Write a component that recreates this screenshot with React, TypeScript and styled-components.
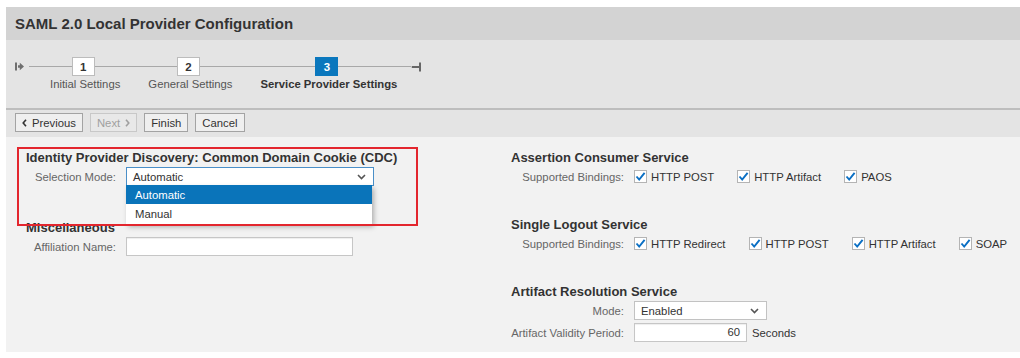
import React from "react";
import styled, { createGlobalStyle } from "styled-components";

const GlobalStyle = createGlobalStyle`
  html, body {
    margin: 0;
    padding: 0;
    background: #ffffff;
  }
  body {
    font-family: "Liberation Sans", Arial, sans-serif;
    font-size: 11.3px;
    color: #333333;
  }
  * {
    box-sizing: border-box;
  }
`;

const Page = styled.div`
  height: 358px;
  padding: 7px 0 6px 6px;
  display: flex;
  flex-direction: column;
`;

const TitleBar = styled.header`
  height: 33px;
  flex: none;
  background: #d3d3d3;
  display: flex;
  align-items: center;
  padding-left: 9px;
  h1 {
    margin: 0;
    font-size: 15px;
    font-weight: 700;
    color: #333333;
  }
`;

const Stepper = styled.div`
  height: 70px;
  flex: none;
  background: #e4e4e4;
  border-bottom: 2px solid #bdbdbd;
  padding: 17px 0 0 9px;
  display: flex;
  align-items: flex-start;
`;

const Cap = styled.div<{ $width: number }>`
  width: ${(p) => p.$width}px;
  height: 19px;
  flex: none;
  display: flex;
  align-items: center;
  svg {
    flex: none;
  }
`;

const Connector = styled.span`
  flex: 1;
  height: 1px;
  background: #a8a8a8;
  margin-left: 5px;
`;

const Step = styled.div`
  position: relative;
  padding: 0 14px;
  display: flex;
  flex-direction: column;
  align-items: center;
  &::before {
    content: "";
    position: absolute;
    left: 0;
    right: 0;
    top: 9px;
    height: 1px;
    background: #a8a8a8;
  }
`;

const StepBox = styled.span<{ $active?: boolean }>`
  position: relative;
  z-index: 1;
  width: 23px;
  height: 19px;
  margin-right: 4px;
  display: flex;
  align-items: center;
  justify-content: center;
  font-weight: 700;
  font-size: 11.5px;
  background: ${(p) => (p.$active ? "#0a77bd" : "#ffffff")};
  color: ${(p) => (p.$active ? "#ffffff" : "#333333")};
  border: 1px solid ${(p) => (p.$active ? "#0a77bd" : "#bcbcbc")};
`;

const StepLabel = styled.span<{ $active?: boolean }>`
  margin-top: 1px;
  line-height: 14px;
  white-space: nowrap;
  font-weight: ${(p) => (p.$active ? 700 : 400)};
  color: ${(p) => (p.$active ? "#333333" : "#555555")};
`;

const Toolbar = styled.div`
  height: 27px;
  flex: none;
  background: #e4e4e4;
  padding: 3px 0 0 9px;
  display: flex;
  align-items: flex-start;
  gap: 7px;
`;

const Button = styled.button`
  height: 19px;
  padding: 0 6px;
  display: inline-flex;
  align-items: center;
  gap: 5px;
  font-family: inherit;
  font-size: 11.3px;
  color: #333333;
  background: #efefef;
  border: 1px solid #a3a3a3;
  border-radius: 0;
  &:disabled {
    color: #a0a0a0;
    background: #e8e8e8;
    border-color: #c8c8c8;
  }
`;

const Content = styled.main`
  flex: 1;
  background: #f2f2f2;
  padding: 14px 0 0 20px;
  display: grid;
  grid-template-columns: 485px 1fr;
  align-items: start;
`;

const Column = styled.div<{ $gap: number }>`
  display: flex;
  flex-direction: column;
  gap: ${(p) => p.$gap}px;
`;

const Section = styled.section`
  position: relative;
  display: flex;
  flex-direction: column;
`;

const Highlight = styled.span`
  position: absolute;
  left: -9px;
  top: -4px;
  width: 401px;
  height: 79px;
  border: 2px solid #e3262e;
  pointer-events: none;
  z-index: 3;
`;

const SectionTitle = styled.h3`
  margin: 0 0 2px;
  font-size: 13px;
  line-height: 14px;
  font-weight: 700;
  color: #333333;
`;

const Rows = styled.div`
  display: flex;
  flex-direction: column;
  gap: 3px;
`;

const FormRow = styled.div`
  display: flex;
  align-items: center;
  gap: 10px;
  height: 19px;
`;

const FieldLabel = styled.label<{ $width: number }>`
  width: ${(p) => p.$width}px;
  flex: none;
  text-align: right;
  color: #666666;
  white-space: nowrap;
`;

const SelectWrap = styled.div<{ $width: number; $focused?: boolean }>`
  position: relative;
  width: ${(p) => p.$width}px;
  height: 19px;
  background: #ffffff;
  border: 1px solid ${(p) => (p.$focused ? "#4a8fc8" : "#c2c2c2")};
  padding: 0 7px 0 6px;
  display: flex;
  align-items: center;
  justify-content: space-between;
  color: #333333;
`;

const ListBox = styled.ul`
  position: absolute;
  top: 100%;
  left: -1px;
  width: 100%;
  margin: 0;
  padding: 0 0 1px;
  list-style: none;
  background: #ffffff;
  box-shadow: 2px 3px 5px rgba(0, 0, 0, 0.28);
  z-index: 2;
`;

const Option = styled.li<{ $selected?: boolean }>`
  height: 19px;
  line-height: 20px;
  padding-left: 9px;
  background: ${(p) => (p.$selected ? "#0a74ba" : "#ffffff")};
  color: ${(p) => (p.$selected ? "#ffffff" : "#333333")};
`;

const TextInput = styled.div<{ $width: number; $align?: string }>`
  width: ${(p) => p.$width}px;
  height: 19px;
  flex: none;
  background: #ffffff;
  border: 1px solid #c6c6c6;
  box-shadow: inset 0 1px 1px rgba(0, 0, 0, 0.07);
  padding: 0 6px;
  line-height: 17px;
  text-align: ${(p) => p.$align || "left"};
  color: #333333;
`;

const Unit = styled.span`
  margin-left: -5px;
  color: #333333;
`;

const Bindings = styled.div`
  display: flex;
  align-items: center;
  gap: 23px;
`;

const CheckItem = styled.span`
  display: inline-flex;
  align-items: center;
  gap: 4px;
  white-space: nowrap;
  color: #333333;
`;

const Box = styled.span`
  width: 13px;
  height: 13px;
  flex: none;
  background: #ffffff;
  border: 1px solid #b4b4b4;
  display: flex;
  align-items: center;
  justify-content: center;
`;

const Chevron = () => (
  <svg width="9" height="6" viewBox="0 0 9 6">
    <path d="M1 1 L4.5 4.5 L8 1" fill="none" stroke="#555" strokeWidth="1.6" />
  </svg>
);

const Check = ({ label }: { label: string }) => (
  <CheckItem>
    <Box>
      <svg width="11" height="11" viewBox="0 0 11 11">
        <path d="M1.5 5.5 L4.2 8.6 L9.6 1.8" fill="none" stroke="#0a6fc4" strokeWidth="1.9" />
      </svg>
    </Box>
    {label}
  </CheckItem>
);

const steps = [
  { n: 1, label: "Initial Settings" },
  { n: 2, label: "General Settings" },
  { n: 3, label: "Service Provider Settings", active: true },
];

const App = () => {
  return (
    <>
      <GlobalStyle />
      <Page>
        <TitleBar>
          <h1>SAML 2.0 Local Provider Configuration</h1>
        </TitleBar>

        <Stepper>
          <Cap $width={21}>
            <svg width="9" height="9" viewBox="0 0 9 9">
              <rect x="0" y="0.5" width="2" height="8" fill="#6f6f6f" />
              <path d="M3 3.3 H4.8 V0.8 L9 4.5 L4.8 8.2 V5.7 H3 Z" fill="#6f6f6f" />
            </svg>
            <Connector />
          </Cap>
          {steps.map((s) => (
            <Step key={s.n}>
              <StepBox $active={s.active}>{s.n}</StepBox>
              <StepLabel $active={s.active}>{s.label}</StepLabel>
            </Step>
          ))}
          <Cap $width={12}>
            <svg width="12" height="10" viewBox="0 0 12 10">
              <rect x="0" y="4.5" width="1" height="1" fill="#a8a8a8" />
              <rect x="1" y="4" width="7" height="2" fill="#666" />
              <rect x="8" y="0.5" width="2" height="9" fill="#666" />
            </svg>
          </Cap>
        </Stepper>

        <Toolbar>
          <Button type="button">
            <svg width="5" height="8" viewBox="0 0 5 8">
              <path d="M4 0.8 L1.2 4 L4 7.2" fill="none" stroke="#333" strokeWidth="1.6" />
            </svg>
            Previous
          </Button>
          <Button type="button" disabled>
            Next
            <svg width="5" height="8" viewBox="0 0 5 8">
              <path d="M1 0.8 L3.8 4 L1 7.2" fill="none" stroke="#a0a0a0" strokeWidth="1.6" />
            </svg>
          </Button>
          <Button type="button">Finish</Button>
          <Button type="button">Cancel</Button>
        </Toolbar>

        <Content>
          <Column $gap={35}>
            <Section>
              <Highlight />
              <SectionTitle>Identity Provider Discovery: Common Domain Cookie (CDC)</SectionTitle>
              <Rows>
                <FormRow>
                  <FieldLabel $width={90}>Selection Mode:</FieldLabel>
                  <SelectWrap $width={248} $focused>
                    <span>Automatic</span>
                    <Chevron />
                    <ListBox>
                      <Option $selected>Automatic</Option>
                      <Option>Manual</Option>
                    </ListBox>
                  </SelectWrap>
                </FormRow>
              </Rows>
            </Section>
            <Section>
              <SectionTitle>Miscellaneous</SectionTitle>
              <Rows>
                <FormRow>
                  <FieldLabel $width={90}>Affiliation Name:</FieldLabel>
                  <TextInput $width={227} />
                </FormRow>
              </Rows>
            </Section>
          </Column>

          <Column $gap={32}>
            <Section>
              <SectionTitle>Assertion Consumer Service</SectionTitle>
              <Rows>
                <FormRow>
                  <FieldLabel $width={113}>Supported Bindings:</FieldLabel>
                  <Bindings>
                    <Check label="HTTP POST" />
                    <Check label="HTTP Artifact" />
                    <Check label="PAOS" />
                  </Bindings>
                </FormRow>
              </Rows>
            </Section>
            <Section>
              <SectionTitle>Single Logout Service</SectionTitle>
              <Rows>
                <FormRow>
                  <FieldLabel $width={113}>Supported Bindings:</FieldLabel>
                  <Bindings>
                    <Check label="HTTP Redirect" />
                    <Check label="HTTP POST" />
                    <Check label="HTTP Artifact" />
                    <Check label="SOAP" />
                  </Bindings>
                </FormRow>
              </Rows>
            </Section>
            <Section>
              <SectionTitle>Artifact Resolution Service</SectionTitle>
              <Rows>
                <FormRow>
                  <FieldLabel $width={113}>Mode:</FieldLabel>
                  <SelectWrap $width={133}>
                    <span>Enabled</span>
                    <Chevron />
                  </SelectWrap>
                </FormRow>
                <FormRow>
                  <FieldLabel $width={113}>Artifact Validity Period:</FieldLabel>
                  <TextInput $width={113} $align="right">60</TextInput>
                  <Unit>Seconds</Unit>
                </FormRow>
              </Rows>
            </Section>
          </Column>
        </Content>
      </Page>
    </>
  );
};

export default App;
